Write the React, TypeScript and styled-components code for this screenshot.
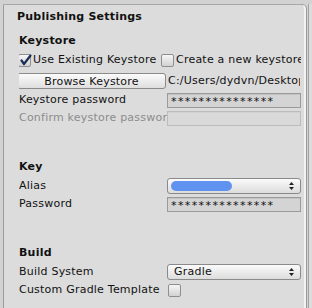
import React from 'react';
import styled, { createGlobalStyle } from 'styled-components';

const GlobalStyle = createGlobalStyle`
  html, body {
    margin: 0;
    padding: 0;
    background: #cfcfcf;
  }
  body {
    font-family: "DejaVu Sans", Verdana, sans-serif;
    font-size: 11px;
    letter-spacing: 0.22px;
    color: #111;
  }
`;

const Frame = styled.div`
  display: flex;
  width: 312px;
  height: 308px;
  overflow: hidden;
  background: #d2d2d2;
`;

const Panel = styled.div`
  margin: 4px 0 0 3px;
  width: 303px;
  box-sizing: border-box;
  height: 320px;
  background: #dcdcdc;
  border-left: 1px solid #9c9c9c;
  border-top: 1px solid #a8a8a8;
  border-right: 2px solid #f2f2f2;
  border-top-right-radius: 5px;
  box-shadow: 1px 0 0 #9a9a9a;
  padding: 0 3px 0 15px;
  overflow: hidden;
`;

const Gutter = styled.div`
  flex: 1;
  margin-left: 2px;
  border-left: 1px solid #a4a4a4;
  background: #dcdcdc;
  margin-top: 4px;
`;

const Title = styled.div`
  font-weight: bold;
  line-height: 13px;
  margin: 5px 0 0 -2px;
`;

const SubTitle = styled.div<{ $gap: number }>`
  font-weight: bold;
  line-height: 13px;
  margin-top: ${(p) => p.$gap}px;
  margin-bottom: 4px;
`;

const Row = styled.div<{ $mt?: number }>`
  display: flex;
  align-items: center;
  height: 18px;
  margin-top: ${(p) => p.$mt ?? 0}px;
  white-space: nowrap;
  overflow: hidden;
`;

const Label = styled.div<{ $disabled?: boolean }>`
  width: 148px;
  flex: none;
  overflow: hidden;
  line-height: 18px;
  color: ${(p) => (p.$disabled ? '#8c8c8c' : '#111')};
`;

const Toggle = styled.label<{ $width?: number }>`
  display: flex;
  align-items: center;
  gap: 2px;
  flex: none;
  width: ${(p) => (p.$width ? `${p.$width}px` : 'auto')};
  line-height: 18px;
`;

const Box = styled.span`
  width: 11px;
  height: 11px;
  flex: none;
  display: inline-flex;
  align-items: center;
  justify-content: center;
  border: 1px solid #8e8e8e;
  border-radius: 2px;
  background: linear-gradient(#f6f6f6, #d2d2d2);
  position: relative;
`;

const Check = styled.svg`
  position: absolute;
  left: 0;
  top: -1px;
`;

const Button = styled.div`
  width: 149px;
  height: 16px;
  box-sizing: border-box;
  margin-left: -2px;
  align-self: flex-start;
  flex: none;
  border: 1px solid #8a8a8a;
  border-radius: 3px;
  background: linear-gradient(#fbfbfb, #dedede);
  text-align: center;
  line-height: 15px;
`;

const PathText = styled.div`
  margin-left: 2px;
  width: 132px;
  overflow: hidden;
  line-height: 16px;
  align-self: flex-start;
`;

const Field = styled.div<{ $disabled?: boolean }>`
  width: 134px;
  height: 15px;
  box-sizing: border-box;
  flex: none;
  border: 1px solid ${(p) => (p.$disabled ? '#bcbcbc' : '#9a9a9a')};
  background: ${(p) => (p.$disabled ? '#d9d9d9' : '#d4d4d4')};
  box-shadow: inset 0 1px 0 ${(p) => (p.$disabled ? '#d2d2d2' : '#c4c4c4')};
  padding-left: 3px;
  line-height: 15px;
  letter-spacing: 1.4px;
  overflow: hidden;
`;

const Select = styled.div`
  width: 134px;
  height: 16px;
  box-sizing: border-box;
  flex: none;
  display: flex;
  align-items: center;
  justify-content: space-between;
  padding: 0 6px 0 3px;
  border: 1px solid #8a8a8a;
  border-radius: 3px;
  background: linear-gradient(#fbfbfb, #dcdcdc);
  line-height: 14px;
`;

const SelectText = styled.span`
  padding-left: 3px;
`;

const Blur = styled.span`
  width: 61px;
  height: 10px;
  border-radius: 5px;
  background: #5f93ef;
`;

const Arrows = () => (
  <svg width="5" height="8" viewBox="0 0 5 8">
    <path d="M2.5 0 L5 3 L0 3 Z M2.5 8 L5 5 L0 5 Z" fill="#222" />
  </svg>
);

const Checked = () => (
  <Check width="13" height="13" viewBox="0 0 13 13">
    <path d="M2.5 6.5 L5 10 L11.5 1.5" fill="none" stroke="#1b2f55" strokeWidth="2.2" strokeLinecap="round" strokeLinejoin="round" />
  </Check>
);

const App: React.FC = () => {
  return (
    <>
      <GlobalStyle />
      <Frame>
        <Panel>
          <Title>Publishing Settings</Title>

          <SubTitle $gap={11}>Keystore</SubTitle>
          <Row $mt={1}>
            <Toggle $width={143} style={{ marginLeft: -1 }}>
              <Box>
                <Checked />
              </Box>
              Use Existing Keystore
            </Toggle>
            <Toggle>
              <Box />
              Create a new keystore
            </Toggle>
          </Row>
          <Row $mt={4}>
            <Button>Browse Keystore</Button>
            <PathText>C:/Users/dydvn/Desktop/user.keystore</PathText>
          </Row>
          <Row>
            <Label>Keystore password</Label>
            <Field>***************</Field>
          </Row>
          <Row>
            <Label $disabled>Confirm keystore password</Label>
            <Field $disabled />
          </Row>

          <SubTitle $gap={33}>Key</SubTitle>
          <Row>
            <Label>Alias</Label>
            <Select>
              <Blur />
              <Arrows />
            </Select>
          </Row>
          <Row>
            <Label>Password</Label>
            <Field>***************</Field>
          </Row>

          <SubTitle $gap={33}>Build</SubTitle>
          <Row $mt={1}>
            <Label>Build System</Label>
            <Select>
              <SelectText>Gradle</SelectText>
              <Arrows />
            </Select>
          </Row>
          <Row>
            <Label>Custom Gradle Template</Label>
            <Box style={{ marginLeft: 1 }} />
          </Row>
        </Panel>
        <Gutter />
      </Frame>
    </>
  );
};

export default App;
